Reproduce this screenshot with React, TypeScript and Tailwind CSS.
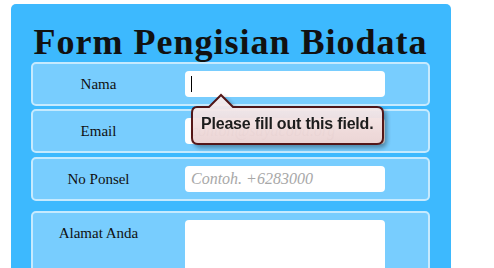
import React from "react";

const serif = { fontFamily: '"Liberation Serif", Georgia, serif' };

function Row({ label, children, className }: { label: string; children: React.ReactNode; className: string }) {
  return (
    <div className={`flex rounded-[5px] border-2 border-[#c6eafe] bg-[#78cdfe] ${className}`}>
      <div className="flex h-[26px] w-[131px] items-center justify-center text-[15px] text-[#111]" style={serif}>
        {label}
      </div>
      <div className="ml-[21px]">{children}</div>
    </div>
  );
}

function Field({ placeholder, caret }: { placeholder?: string; caret?: boolean }) {
  return (
    <div className="flex h-[26px] w-[200px] items-center rounded-[4px] bg-white px-[6px]">
      {caret && <span className="h-[16px] w-px bg-black" />}
      {placeholder && (
        <span className="text-[16px] italic text-[#a8a8a8]" style={serif}>
          {placeholder}
        </span>
      )}
    </div>
  );
}

export default function App() {
  return (
    <div className="relative h-[268px] w-[494px] overflow-hidden bg-white">
      <div className="ml-[11px] mt-[4px] h-[300px] w-[440px] rounded-t-[5px] bg-[#3db9fe] pl-[20px] pr-[21px]">
        <h1
          className="flex h-[58px] items-end justify-center pb-[2px] text-[36px] font-bold leading-none tracking-[1px] text-[#111]"
          style={serif}
        >
          Form Pengisian Biodata
        </h1>
        <div className="flex flex-col">
          <Row label="Nama" className="h-[44px] items-center">
            <Field caret />
          </Row>
          <Row label="Email" className="mt-[3px] h-[44px] items-center">
            <Field placeholder="contoh@sayacoba.org" />
          </Row>
          <Row label="No Ponsel" className="mt-[4px] h-[44px] items-center">
            <Field placeholder="Contoh. +6283000" />
          </Row>
          <Row label="Alamat Anda" className="mt-[10px] h-[100px] items-start pt-[7px]">
            <div className="h-[80px] w-[200px] rounded-[4px] bg-white" />
          </Row>
        </div>
      </div>

      <div className="absolute left-[190px] top-[92px] h-[56px] w-[200px] opacity-[0.95]">
        <svg width="200" height="56" className="absolute left-0 top-0 drop-shadow-[3px_3px_2px_rgba(0,0,0,0.35)]">
          <defs>
            <linearGradient id="tg" x1="0" y1="0" x2="0" y2="1">
              <stop offset="0" stopColor="#faf0f0" />
              <stop offset="1" stopColor="#ebd2d2" />
            </linearGradient>
          </defs>
          <path
            d="M7 15 H19 L31 3 L43 15 H187 Q193 15 193 21 V46 Q193 52 187 52 H8 Q2 52 2 46 V21 Q2 15 7 15 Z"
            fill="url(#tg)"
            stroke="#4e0c0c"
            strokeWidth="2"
          />
        </svg>
        <span
          className="absolute left-[11px] top-[22px] whitespace-nowrap text-[16px] font-bold leading-[20px] tracking-[-0.2px] text-[#111]"
          style={{ fontFamily: '"Liberation Sans", Arial, sans-serif' }}
        >
          Please fill out this field.
        </span>
      </div>
    </div>
  );
}
